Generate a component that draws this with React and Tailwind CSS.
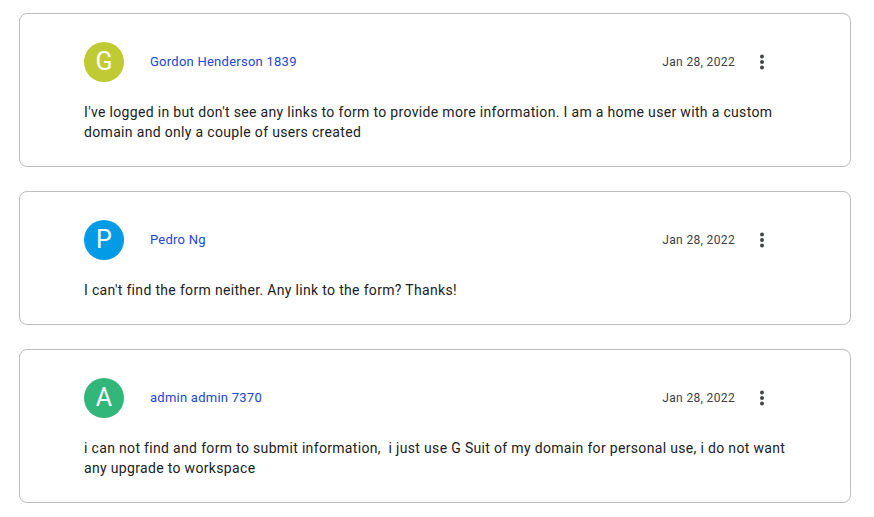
import React from 'react';

const posts = [
  {
    id: 1,
    initial: 'G',
    color: 'bg-[#c0ca33]',
    name: 'Gordon Henderson 1839',
    date: 'Jan 28, 2022',
    body: "I've logged in but don't see any links to form to provide more information. I am a home user with a custom domain and only a couple of users created",
  },
  {
    id: 2,
    initial: 'P',
    color: 'bg-[#039be5]',
    name: 'Pedro Ng',
    date: 'Jan 28, 2022',
    body: "I can't find the form neither. Any link to the form? Thanks!",
  },
  {
    id: 3,
    initial: 'A',
    color: 'bg-[#33b679]',
    name: 'admin admin 7370',
    date: 'Jan 28, 2022',
    body: 'i can not find and form to submit information,\u00a0 i just use G Suit of my domain for personal use, i do not want any upgrade to workspace',
  },
];

const MoreVert = () => (
  <svg width="24" height="24" viewBox="0 0 24 24" fill="#444746">
    <circle cx="12" cy="6.5" r="2" />
    <circle cx="12" cy="12" r="2" />
    <circle cx="12" cy="17.5" r="2" />
  </svg>
);

const Reply = ({ post }) => (
  <div className="border border-[#bdbdbd] rounded-lg bg-white pl-[64px] pr-[60px] pt-[28px] pb-[24px]">
    <div className="flex items-center pr-[16px]">
      <div
        className={`w-10 h-10 rounded-full ${post.color} text-white flex items-center justify-center text-[25px] font-['Roboto',sans-serif]`}
      >
        {post.initial}
      </div>
      <a className="ml-[26px] text-[13px] text-[#2146d8] font-['Roboto',sans-serif] tracking-[0.25px]">{post.name}</a>
      <div className="ml-auto flex items-center gap-[15px]">
        <span className="text-[12px] text-[#3c4043] font-['Roboto',sans-serif] tracking-[0.35px]">{post.date}</span>
        <button className="w-6 h-6 flex items-center justify-center">
          <MoreVert />
        </button>
      </div>
    </div>
    <p className="mt-[20px] text-[14px] leading-[20px] text-[#202124] font-['Roboto',sans-serif] tracking-[0.33px]">
      {post.body}
    </p>
  </div>
);

export default function App() {
  return (
    <div className="bg-white min-h-screen pt-[13px] pl-[19px] pr-[23px]">
      <div className="flex flex-col gap-[24px]">
        {posts.map((p) => (
          <Reply key={p.id} post={p} />
        ))}
      </div>
    </div>
  );
}
